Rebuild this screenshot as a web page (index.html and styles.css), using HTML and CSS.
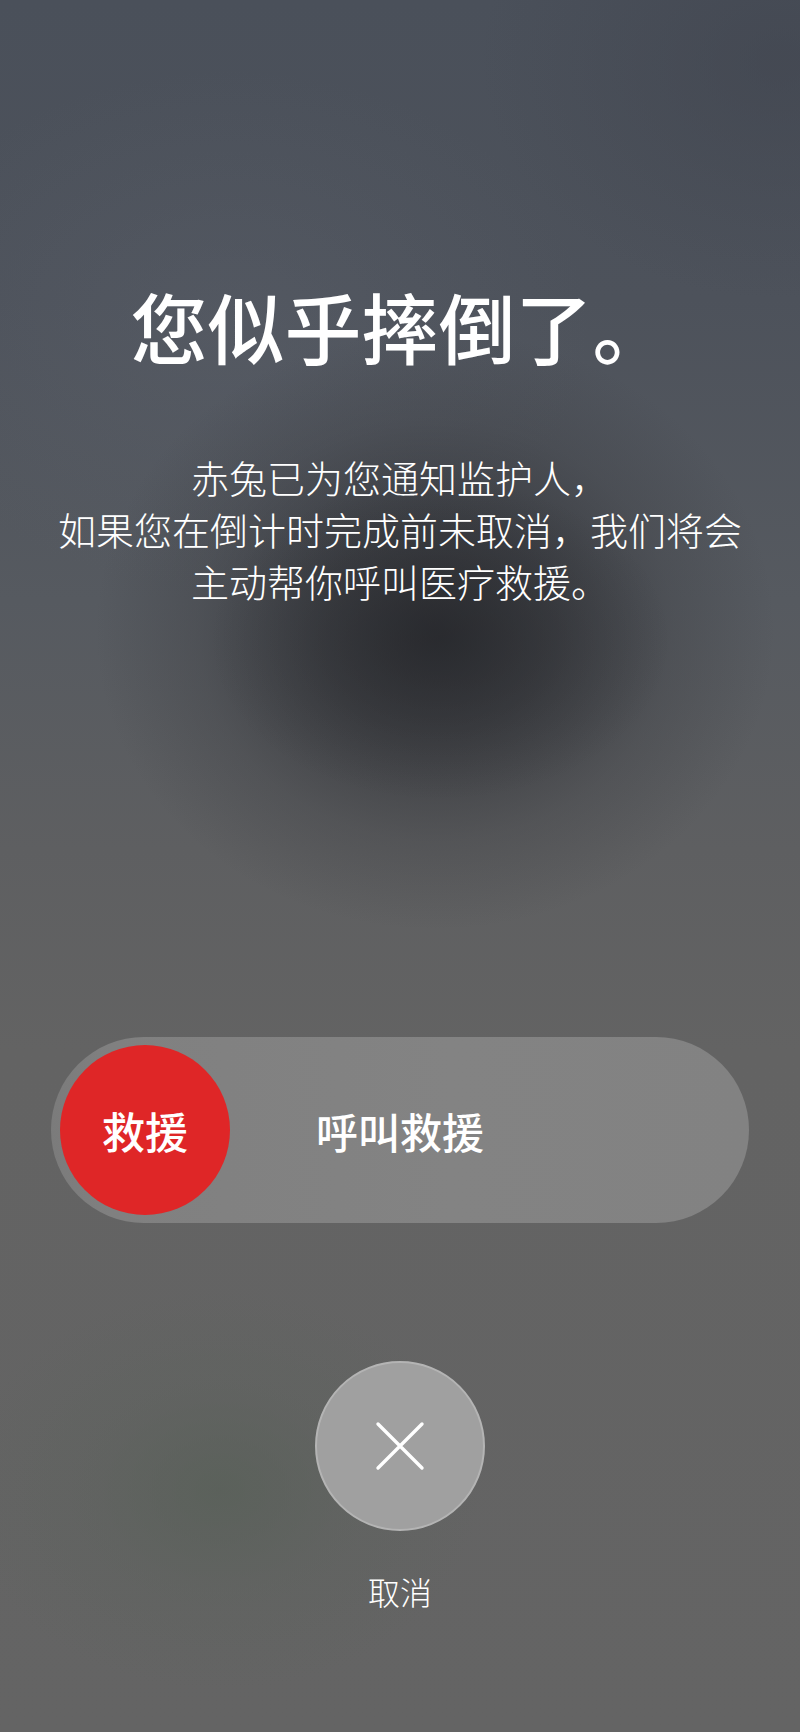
FILE: index.html
```html
<!DOCTYPE html>
<html lang="zh-CN">
<head>
<meta charset="utf-8">
<title>跌倒提醒</title>
<link rel="stylesheet" href="styles.css">
</head>
<body>
<main class="screen">
  <div class="bg-blob bg-blob--dark"></div>
  <div class="bg-blob bg-blob--core"></div>
  <div class="bg-blob bg-blob--green"></div>
  <section class="intro">
    <h1 class="title">您似乎摔倒了。</h1>
    <p class="message">赤兔已为您通知监护人，<br>如果您在倒计时完成前未取消，我们将会<br>主动帮你呼叫医疗救援。</p>
  </section>
  <div class="slider">
    <div class="slider__knob">救援</div>
    <div class="slider__label">呼叫救援</div>
  </div>
  <div class="cancel">
    <button class="cancel__btn" aria-label="取消">
      <svg class="cancel__icon" viewBox="0 0 52 52" width="52" height="52">
        <path d="M4 4 L48 48 M48 4 L4 48" stroke="#fff" stroke-width="3.4" stroke-linecap="round" fill="none"/>
      </svg>
    </button>
    <div class="cancel__label">取消</div>
  </div>
</main>
</body>
</html>
```

FILE: styles.css
```css
html, body {
  margin: 0;
  padding: 0;
}
body {
  width: 800px;
  height: 1732px;
  overflow: hidden;
  font-family: "Noto Sans CJK SC", "Noto Sans", sans-serif;
  color: #fff;
}
.screen {
  position: relative;
  width: 800px;
  height: 1732px;
  overflow: hidden;
  display: flex;
  flex-direction: column;
  align-items: center;
  background:
    radial-gradient(ellipse 300px 240px at 780px 60px, rgba(62,66,76,0.5), rgba(62,66,76,0) 100%),
    radial-gradient(ellipse 360px 260px at 230px 330px, rgba(95,100,110,0.35), rgba(95,100,110,0) 100%),
    linear-gradient(180deg, #4a505a 0px, #4d525b 300px, #565a60 600px, #5e5f61 850px, #636363 1050px, #646464 1732px);
}
.bg-blob {
  position: absolute;
  pointer-events: none;
}
.bg-blob--dark {
  left: 0;
  top: 150px;
  width: 800px;
  height: 900px;
  background: radial-gradient(ellipse 340px 300px at 435px 480px, rgba(40,41,45,0.8) 0%, rgba(44,45,49,0.6) 35%, rgba(52,53,57,0.25) 70%, rgba(60,60,64,0) 100%);
}
.bg-blob--core {
  left: 0;
  top: 150px;
  width: 800px;
  height: 900px;
  background: radial-gradient(ellipse 230px 160px at 440px 490px, rgba(36,37,41,0.6) 0%, rgba(36,37,41,0.2) 60%, rgba(36,37,41,0) 100%);
}
.bg-blob--green {
  left: -80px;
  top: 1200px;
  width: 640px;
  height: 560px;
  background: radial-gradient(ellipse 260px 200px at 300px 290px, rgba(88,96,88,0.75) 0%, rgba(92,98,92,0.35) 50%, rgba(100,100,100,0) 100%);
}
.intro {
  position: relative;
  display: flex;
  flex-direction: column;
  align-items: center;
  padding-top: 280px;
}
.title {
  margin: 0;
  font-size: 77px;
  line-height: 92px;
  font-weight: 500;
  letter-spacing: 0;
  text-align: center;
}
.message {
  margin: 79px 0 0;
  font-size: 38px;
  line-height: 52px;
  font-weight: 300;
  text-align: center;
  white-space: nowrap;
}
.slider {
  position: relative;
  margin-top: 430px;
  width: 698px;
  height: 186px;
  border-radius: 93px;
  background: linear-gradient(90deg, #7b7b7b 0px, #808080 60px, #838383 400px, #828282 698px);
  display: flex;
  align-items: center;
  box-sizing: border-box;
  padding-left: 9px;
}
.slider__knob {
  width: 170px;
  height: 170px;
  border-radius: 50%;
  background: #df2627;
  display: flex;
  align-items: center;
  justify-content: center;
  font-size: 43px;
  font-weight: 500;
  flex-shrink: 0;
}
.slider__label {
  position: absolute;
  left: 0;
  right: 0;
  top: 0;
  bottom: 0;
  display: flex;
  align-items: center;
  justify-content: center;
  font-size: 42px;
  font-weight: 500;
  pointer-events: none;
}
.cancel {
  position: relative;
  margin-top: 138px;
  display: flex;
  flex-direction: column;
  align-items: center;
}
.cancel__btn {
  width: 170px;
  height: 170px;
  border-radius: 50%;
  background: #a0a0a0;
  border: 2px solid #b4b4b4;
  box-sizing: border-box;
  padding: 0;
  display: flex;
  align-items: center;
  justify-content: center;
}
.cancel__icon {
  display: block;
}
.cancel__label {
  margin-top: 38px;
  font-size: 32px;
  line-height: 44px;
  font-weight: 300;
}
```
